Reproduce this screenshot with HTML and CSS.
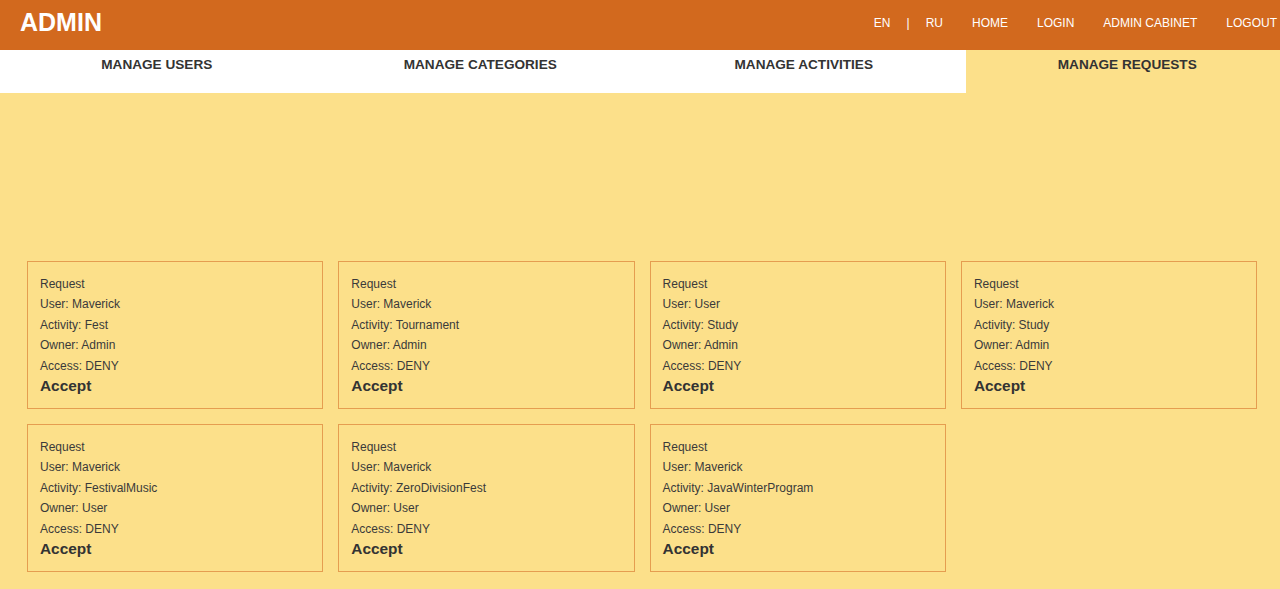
FILE: index.html
```html
<!DOCTYPE html>
<html lang="en">
<head>
<meta charset="utf-8">
<title>Admin</title>
<link rel="stylesheet" href="styles.css">
</head>
<body>
<header class="topbar">
  <div class="brand">ADMIN</div>
  <nav class="nav">
    <div class="lang">
      <a href="#">EN</a>
      <span class="sep">|</span>
      <a href="#">RU</a>
    </div>
    <a href="#">HOME</a>
    <a href="#">LOGIN</a>
    <a href="#">ADMIN CABINET</a>
    <a href="#">LOGOUT</a>
  </nav>
</header>
<div class="tabs">
  <a class="tab" href="#">MANAGE USERS</a>
  <a class="tab" href="#">MANAGE CATEGORIES</a>
  <a class="tab" href="#">MANAGE ACTIVITIES</a>
  <a class="tab active" href="#">MANAGE REQUESTS</a>
</div>
<main class="grid">
  <div class="card"><p>Request</p><p>User: Maverick</p><p>Activity: Fest</p><p>Owner: Admin</p><p>Access: DENY</p><a class="accept" href="#">Accept</a></div>
  <div class="card"><p>Request</p><p>User: Maverick</p><p>Activity: Tournament</p><p>Owner: Admin</p><p>Access: DENY</p><a class="accept" href="#">Accept</a></div>
  <div class="card"><p>Request</p><p>User: User</p><p>Activity: Study</p><p>Owner: Admin</p><p>Access: DENY</p><a class="accept" href="#">Accept</a></div>
  <div class="card"><p>Request</p><p>User: Maverick</p><p>Activity: Study</p><p>Owner: Admin</p><p>Access: DENY</p><a class="accept" href="#">Accept</a></div>
  <div class="card"><p>Request</p><p>User: Maverick</p><p>Activity: FestivalMusic</p><p>Owner: User</p><p>Access: DENY</p><a class="accept" href="#">Accept</a></div>
  <div class="card"><p>Request</p><p>User: Maverick</p><p>Activity: ZeroDivisionFest</p><p>Owner: User</p><p>Access: DENY</p><a class="accept" href="#">Accept</a></div>
  <div class="card"><p>Request</p><p>User: Maverick</p><p>Activity: JavaWinterProgram</p><p>Owner: User</p><p>Access: DENY</p><a class="accept" href="#">Accept</a></div>
</main>
</body>
</html>
```
FILE: styles.css
```css
html, body {
  margin: 0;
  padding: 0;
}
body {
  background: #fce08a;
  font-family: "Liberation Sans", Arial, sans-serif;
  color: #333;
  overflow-x: hidden;
  min-height: 589px;
}
a {
  text-decoration: none;
  color: inherit;
}
.topbar {
  height: 50px;
  background: #d2691e;
  display: flex;
  align-items: center;
  justify-content: space-between;
  padding: 0 3px 0 20px;
  color: #fff;
}
.brand {
  font-size: 25px;
  font-weight: bold;
  margin-top: -6px;
}
.nav {
  display: flex;
  align-items: center;
  gap: 29px;
  font-size: 12px;
  margin-top: -5px;
}
.lang {
  display: flex;
  gap: 16px;
  align-items: center;
}
.tabs {
  display: flex;
  width: 1294px;
  height: 43px;
  margin-left: -5px;
}
.tab {
  flex: 0 0 323.5px;
  background: #fff;
  text-align: center;
  font-weight: bold;
  font-size: 13.6px;
  line-height: 16px;
  padding-top: 7px;
  color: #333;
}
.tab.active {
  background: #fce08a;
}
.grid {
  display: grid;
  grid-template-columns: repeat(4, 296.3px);
  column-gap: 15px;
  row-gap: 15px;
  padding: 168px 0 16px 27px;
}
.card {
  border: 1px solid #e59d50;
  padding: 12px;
  height: 148px;
  box-sizing: border-box;
}
.card p {
  margin: 0;
  font-size: 12px;
  line-height: 20.4px;
  color: #3a3a3a;
}
.accept {
  display: block;
  font-weight: bold;
  font-size: 15.4px;
  line-height: 20px;
}
```
